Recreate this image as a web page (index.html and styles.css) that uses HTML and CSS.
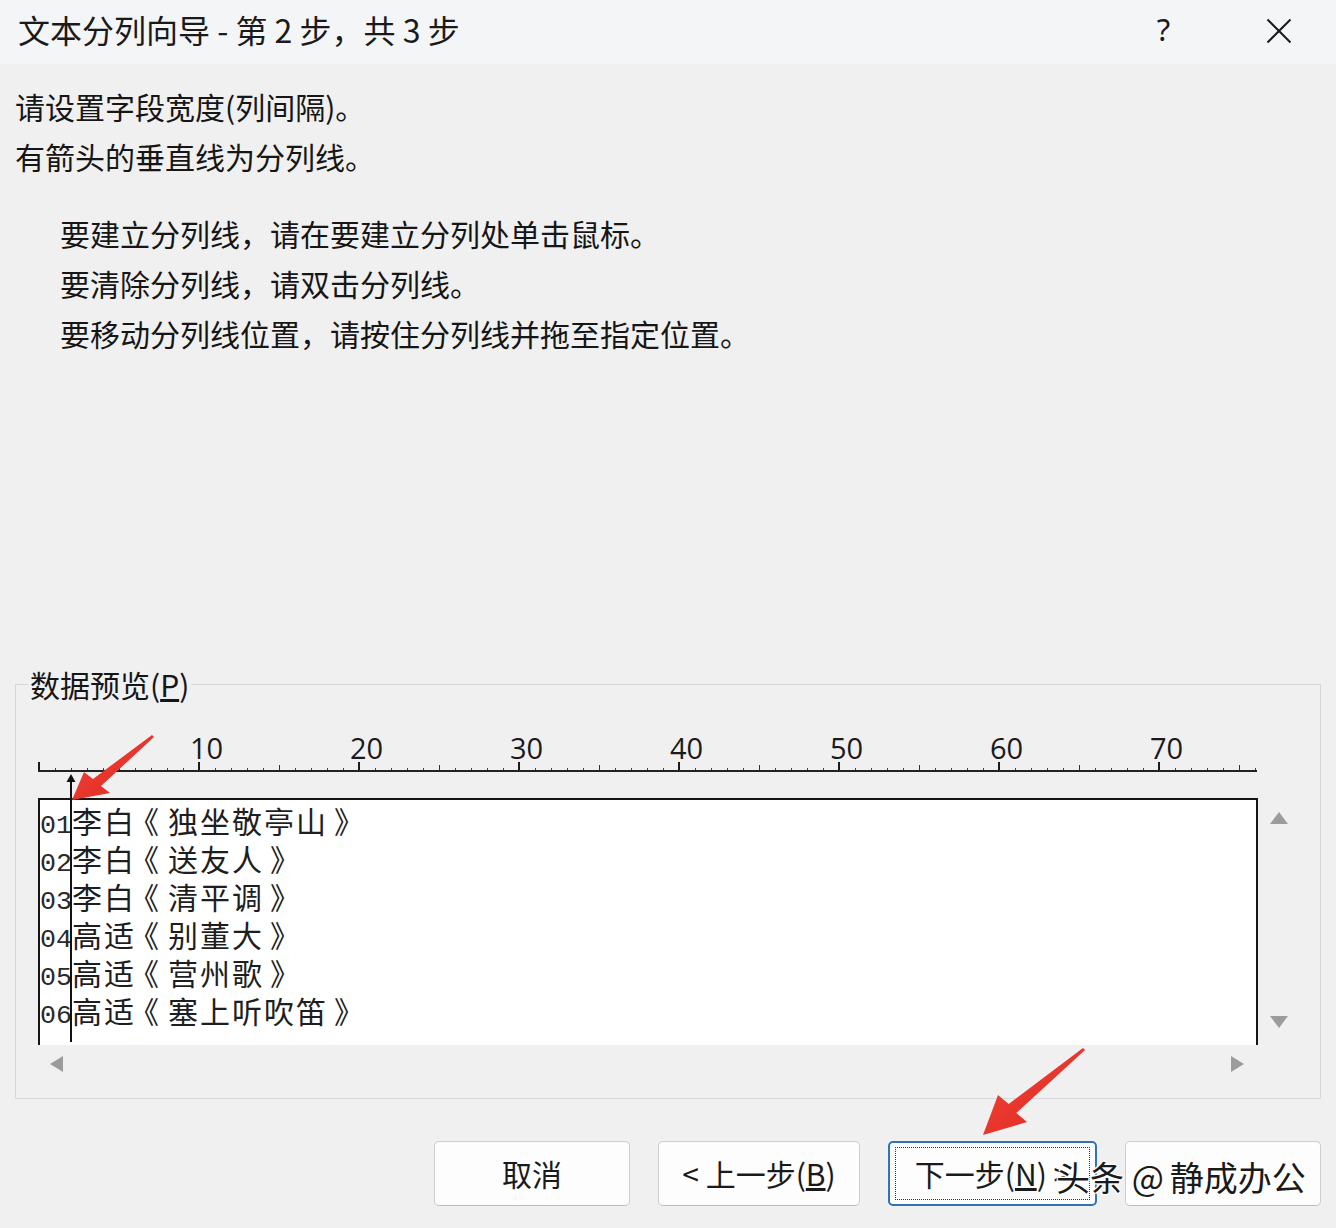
FILE: index.html
```html
<!DOCTYPE html>
<html lang="zh-CN">
<head>
<meta charset="utf-8">
<title>文本分列向导</title>
<link rel="stylesheet" href="styles.css">
</head>
<body>
<div class="dialog">
  <header class="titlebar">
    <div class="title">文本分列向导 - 第 2 步，共 3 步</div>
    <div class="tb-btn help">?</div>
    <div class="tb-btn close">
      <svg width="26" height="26" viewBox="0 0 26 26"><path d="M1.5 1.5L24.5 24.5M24.5 1.5L1.5 24.5" stroke="#1a1a1a" stroke-width="2" fill="none"/></svg>
    </div>
  </header>
  <main class="content">
    <div class="intro">
      <p>请设置字段宽度(列间隔)。</p>
      <p>有箭头的垂直线为分列线。</p>
    </div>
    <div class="tips">
      <p>要建立分列线，请在要建立分列处单击鼠标。</p>
      <p>要清除分列线，请双击分列线。</p>
      <p>要移动分列线位置，请按住分列线并拖至指定位置。</p>
    </div>
    <fieldset class="group">
      <legend>数据预览(<u>P</u>)</legend>
      <div class="preview">
        <div class="ruler">
          <span>10</span><span>20</span><span>30</span><span>40</span><span>50</span><span>60</span><span>70</span>
        </div>
        <div class="grid">
          <div class="box">
            <div class="row"><span class="num">01</span><span class="cjk">李白<span class="bo">《</span>独坐敬亭山<span class="bc">》</span></span></div>
            <div class="row"><span class="num">02</span><span class="cjk">李白<span class="bo">《</span>送友人<span class="bc">》</span></span></div>
            <div class="row"><span class="num">03</span><span class="cjk">李白<span class="bo">《</span>清平调<span class="bc">》</span></span></div>
            <div class="row"><span class="num">04</span><span class="cjk">高适<span class="bo">《</span>别董大<span class="bc">》</span></span></div>
            <div class="row"><span class="num">05</span><span class="cjk">高适<span class="bo">《</span>营州歌<span class="bc">》</span></span></div>
            <div class="row"><span class="num">06</span><span class="cjk">高适<span class="bo">《</span>塞上听吹笛<span class="bc">》</span></span></div>
          </div>
          <div class="vscroll"><span class="tri up"></span><span class="tri down"></span></div>
          <div class="hscroll"><span class="tri left"></span><span class="tri right"></span></div>
          <svg class="divider" width="12" height="268" viewBox="0 0 12 268">
            <polygon points="6,0 1.5,8 10.5,8" fill="#111"/>
            <rect x="5" y="6" width="2" height="262" fill="#111"/>
          </svg>
        </div>
      </div>
    </fieldset>
    <div class="buttons">
      <div class="btn w196">取消</div>
      <div class="btn w202">&lt; 上一步(<u>B</u>)</div>
      <div class="btn w209 default"><div class="focus">下一步(<u>N</u>) &gt;</div></div>
      <div class="btn w196 finish"></div>
    </div>
  </main>
  <svg class="annot" width="1336" height="1228" viewBox="0 0 1336 1228">
    <defs>
      <linearGradient id="rg" x1="0" y1="0" x2="1" y2="1">
        <stop offset="0" stop-color="#f0463b"/>
        <stop offset="1" stop-color="#e0261f"/>
      </linearGradient>
    </defs>
    <polygon points="152,735 93,779 84,772 72,800 110,793 101,786 154,737" fill="url(#rg)"/>
    <polygon points="1083,1048 1008.7,1103.9 998,1095 983,1135 1027,1122 1016.3,1113.1 1085,1050" fill="url(#rg)"/>
  </svg>
  <div class="watermark">头条 <span class="at">@</span>静成办公</div>
</div>
</body>
</html>
```
FILE: styles.css
```css
* { box-sizing: border-box; }
html, body { margin: 0; padding: 0; }
body {
  width: 1336px;
  height: 1228px;
  background: #f0f0f0;
  font-family: "Noto Sans CJK SC", "Noto Sans", sans-serif;
  color: #161616;
  overflow: hidden;
}
.dialog {
  position: relative;
  width: 1336px;
  height: 1228px;
  display: flex;
  flex-direction: column;
}
.titlebar {
  height: 64px;
  flex: none;
  background: #f4f5f7;
  display: flex;
  align-items: center;
  padding-bottom: 6px;
}
.title {
  flex: 1;
  padding-left: 18px;
  font-size: 32px;
  color: #1a1a1a;
}
.tb-btn {
  width: 115px;
  height: 58px;
  display: flex;
  align-items: center;
  justify-content: center;
}
.help {
  font-family: "Noto Sans", sans-serif;
  font-size: 31px;
  font-weight: 400;
  color: #1a1a1a;
}
.close { padding-top: 4px; }
.content {
  flex: 1;
  padding: 17px 15px 0;
  display: flex;
  flex-direction: column;
}
p { margin: 0; }
.intro p, .tips p {
  font-size: 30px;
  line-height: 50px;
  white-space: nowrap;
}
.tips {
  margin-top: 27px;
  padding-left: 45px;
}
.group {
  margin: 306px 0 0;
  padding: 0 0 15px;
  border: 1px solid #d7d7d7;
  min-width: 0;
}
.group legend {
  margin-left: 12px;
  padding: 0 2px;
  font-size: 30px;
  line-height: 40px;
}
.preview {
  margin: 24px 0 0 22px;
}
.ruler {
  width: 1219px;
  height: 44px;
  display: flex;
  padding-left: 152px;
  background:
    linear-gradient(#222, #222) left bottom / 100% 2px no-repeat,
    repeating-linear-gradient(to right, #1a1a1a 0 2px, transparent 2px 160px) left bottom / 100% 10px no-repeat,
    repeating-linear-gradient(to right, transparent 0 1px, #333 1px 2px, transparent 2px 80px) left bottom / 100% 7px no-repeat,
    repeating-linear-gradient(to right, transparent 0 1px, #444 1px 2px, transparent 2px 16px) left bottom / 100% 4px no-repeat;
}
.ruler span {
  flex: none;
  width: 160px;
  font-family: "Open Sans", sans-serif;
  font-size: 29px;
  line-height: 40px;
  color: #1a1a1a;
}
.grid {
  position: relative;
  margin-top: 26px;
  display: grid;
  grid-template-columns: 1220px 42px;
  grid-template-rows: 247px 38px;
}
.box {
  background: #fff;
  border: 2px solid #151515;
  border-bottom: none;
  padding-top: 1px;
}
.row {
  height: 38px;
  line-height: 38px;
  white-space: nowrap;
  color: #1e1e1e;
}
.num {
  font-family: "Liberation Mono", monospace;
  font-size: 26.667px;
  color: #2a2a2a;
}
.cjk {
  font-size: 30px;
  letter-spacing: 2px;
}
.bo {
  position: relative;
  left: -7px;
}
.bc {
  position: relative;
  left: 6px;
}
.vscroll {
  display: flex;
  flex-direction: column;
  justify-content: space-between;
  align-items: center;
  padding: 14px 0 17px;
}
.hscroll {
  display: flex;
  justify-content: space-between;
  align-items: center;
  padding: 0 14px 0 12px;
}
.tri { display: block; width: 0; height: 0; }
.tri.up {
  border-left: 9px solid transparent;
  border-right: 9px solid transparent;
  border-bottom: 12px solid #9c9c9c;
}
.tri.down {
  border-left: 9px solid transparent;
  border-right: 9px solid transparent;
  border-top: 12px solid #9c9c9c;
}
.tri.left {
  border-top: 8px solid transparent;
  border-bottom: 8px solid transparent;
  border-right: 13px solid #9c9c9c;
}
.tri.right {
  border-top: 8px solid transparent;
  border-bottom: 8px solid transparent;
  border-left: 13px solid #9c9c9c;
}
.divider {
  position: absolute;
  left: 27px;
  top: -24px;
}
.buttons {
  display: flex;
  justify-content: flex-end;
  gap: 28px;
  margin-top: 42px;
}
.btn {
  height: 65px;
  background: #fdfdfd;
  border: 1px solid #cdcdcd;
  border-bottom-color: #bdbdbd;
  border-radius: 5px;
  display: flex;
  align-items: center;
  justify-content: center;
  font-size: 30px;
  color: #1a1a1a;
  padding-bottom: 2px;
  white-space: nowrap;
}
.w196 { width: 196px; }
.w202 { width: 202px; }
.w209 { width: 209px; }
.btn.default {
  border: 2px solid #2f73b3;
  padding: 4px 5px;
}
.focus {
  width: 100%;
  height: 100%;
  border: 1px dotted #333;
  display: flex;
  align-items: center;
  justify-content: center;
  padding-bottom: 2px;
}
.annot {
  position: absolute;
  left: 0;
  top: 0;
  pointer-events: none;
}
.watermark {
  position: absolute;
  left: 1056px;
  top: 1152px;
  font-size: 34px;
  line-height: 50px;
  color: #1a1a1a;
  white-space: nowrap;
  text-shadow: 0 0 3px #fff, 0 0 3px #fff, 1px 1px 0 #fff, -1px -1px 0 #fff, 1px -1px 0 #fff, -1px 1px 0 #fff;
  pointer-events: none;
}
.watermark .at {
  margin-right: 6px;
}
```
